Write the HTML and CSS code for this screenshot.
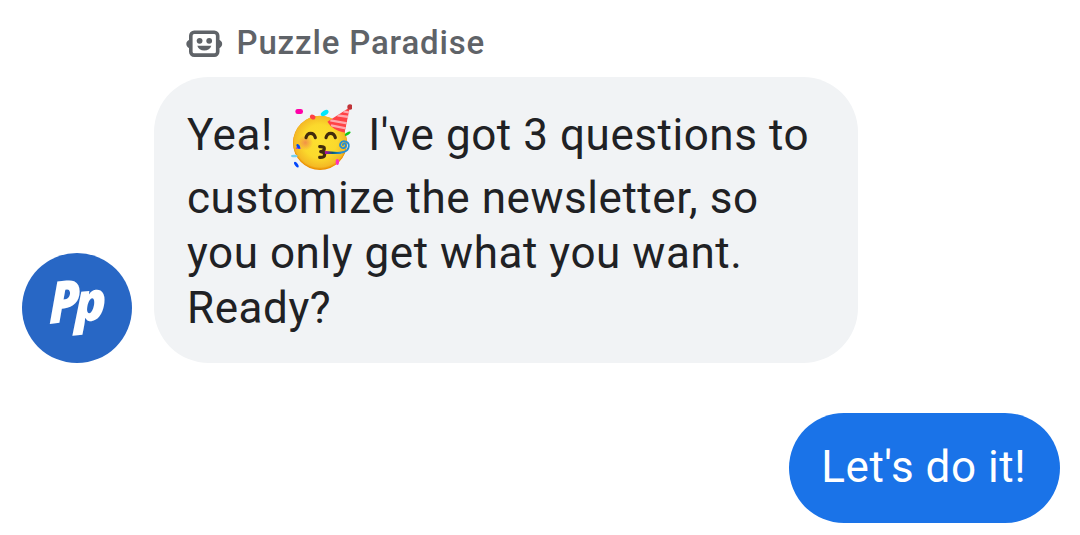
FILE: index.html
```html
<!DOCTYPE html>
<html lang="en">
<head>
<meta charset="utf-8">
<title>Puzzle Paradise</title>
<link rel="stylesheet" href="styles.css">
</head>
<body>
<main class="chat">
  <header class="sender">
    <svg class="bot" viewBox="185 30 38 28" aria-hidden="true">
      <rect x="190.800" y="32.300" width="26.900" height="22.800" rx="3.400" fill="none" stroke="#5f6368" stroke-width="3.600"/>
      <path d="M190.500 39.800a4.200 4.200 0 0 0 0 8.400zM218 39.800a4.200 4.200 0 0 1 0 8.400z" fill="#5f6368"/>
      <circle cx="199.600" cy="40.800" r="2.900" fill="#5f6368"/>
      <circle cx="209.200" cy="40.800" r="2.900" fill="#5f6368"/>
      <path d="M197.300 45.800h14c-.8 3-3.500 4.800-7 4.800s-6.200-1.800-7-4.800z" fill="#5f6368"/>
    </svg>
    <span class="name">Puzzle Paradise</span>
  </header>
  <section class="incoming">
    <svg class="avatar" viewBox="0 0 110 110" role="img" aria-label="Puzzle Paradise">
      <circle cx="55" cy="55" r="55" fill="#2867c5"/>
      <text class="mark" transform="matrix(.88 -.1 0 1.02 27 71)">P</text>
      <text class="mark" transform="matrix(.93 -.1 0 .95 52.500 69.500)">p</text>
    </svg>
    <p class="bubble">
      <span class="line first">Yea! <svg class="emoji" viewBox="33 24 183 204" role="img" aria-label="Partying face">
        <defs>
          <radialGradient id="face" cx=".5" cy=".48" r=".52"><stop offset="0" stop-color="#fde030"/><stop offset=".6" stop-color="#fbd92c"/><stop offset=".92" stop-color="#f4b925"/><stop offset="1" stop-color="#eb8f00"/></radialGradient>
          <radialGradient id="blush"><stop stop-color="#ef7950" stop-opacity=".75"/><stop offset="1" stop-color="#ef7950" stop-opacity="0"/></radialGradient>
          <linearGradient id="horn"><stop stop-color="#bd05a5"/><stop offset=".25" stop-color="#60308a"/><stop offset=".48" stop-color="#075c75"/><stop offset="1" stop-color="#278ed2"/></linearGradient>
          <clipPath id="hat"><path d="M211 36L194 113Q157 105 142 80Z"/></clipPath>
        </defs>
        <circle cx="120" cy="144" r="81" fill="#eb8f00"/>
        <circle cx="120" cy="142.500" r="80.500" fill="url(#face)"/>
        <circle cx="76" cy="143" r="23" fill="url(#blush)"/>
        <g fill="none" stroke="#422b0d" stroke-width="9.500" stroke-linecap="round" stroke-linejoin="round">
          <path d="M78 128q3-13 14-13t14 13M138 128q3-13 14-13t14 13"/>
          <path d="M119 155q15-1 14 6-1 8-11 9 12 1 12 9 0 9-15 8"/>
        </g>
        <g clip-path="url(#hat)">
          <path d="M211 30L194 116Q155 105 138 80Z" fill="#ff4246"/>
          <path d="M190 49l25 5M172 61l42 6M151 76l55 10M153 91l45 9" stroke="#ffa8ad" stroke-width="7"/>
        </g>
        <circle cx="210" cy="36" r="8" fill="#bf3338"/>
        <path d="M137 173q38 3 55-2c17-6 20-28 3-32-13-3-19 12-11 18 7 6 17-2 13-9-3-5-10-2-8 2" fill="none" stroke="#278ed2" stroke-width="5.500" stroke-linecap="round"/>
        <path d="M135 168l48 4v4l-48 1z" fill="url(#horn)"/>
        <rect x="46" y="42" width="23" height="15" rx="7" fill="#ff00a8"/>
        <ellipse cx="98" cy="66" rx="8.500" ry="7" fill="#ff4145" transform="rotate(30 98 66)"/>
        <ellipse cx="134" cy="54" rx="13" ry="7" fill="#00e8fb" transform="rotate(-33 134 54)"/>
        <ellipse cx="203" cy="116" rx="10" ry="4" fill="#14c919" transform="rotate(-33 203 116)"/>
        <path d="M47 162h17l-7-6-9 1z" fill="#bf54b0"/>
        <ellipse cx="55" cy="154" rx="4.500" ry="8" fill="#0049f5" transform="rotate(-33 55 154)"/>
        <ellipse cx="43" cy="183" rx="10" ry="4" fill="#77cfed"/>
        <ellipse cx="49" cy="209" rx="4.500" ry="10" fill="#0045fb" transform="rotate(-35 49 209)"/>
        <ellipse cx="172" cy="201" rx="5" ry="9" fill="#ff30bb"/>
      </svg> I've got 3 questions to</span>
      <span class="line">customize the newsletter, so</span>
      <span class="line">you only get what you want.</span>
      <span class="line">Ready?</span>
    </p>
  </section>
  <p class="reply">Let's do it!</p>
</main>
</body>
</html>
```
FILE: styles.css
```css
* { box-sizing: border-box; }
body {
  margin: 0;
  background: #fff;
  font-family: Roboto, sans-serif;
}
.chat {
  display: flex;
  flex-direction: column;
  width: 1080px;
  height: 535px;
  padding: 22px 20px 0 22px;
  overflow: hidden;
}
.sender {
  display: flex;
  align-items: center;
  gap: 13.5px;
  height: 42px;
  margin: 0 0 13px 163px;
  color: #5f6368;
}
.bot { width: 38px; height: 28px; margin-top: 2px; }
.name {
  font-size: 33px;
  font-weight: 500;
  line-height: 42px;
  letter-spacing: .83px;
  white-space: nowrap;
}
.incoming {
  display: flex;
  align-items: flex-end;
  gap: 22px;
}
.avatar { flex: none; width: 110px; height: 110px; }
.mark {
  fill: #fff;
  font: italic 800 57px "Open Sans", sans-serif;
}
.bubble {
  width: 704px;
  height: 286px;
  margin: 0;
  padding: 31px 33px 0;
  border-radius: 55px;
  background: #f1f3f5;
  color: #202124;
  font-size: 44px;
  line-height: 55px;
  letter-spacing: .55px;
}
.line { display: block; height: 55px; white-space: nowrap; }
.first { height: 63px; }
.emoji {
  width: 61px;
  height: 68px;
  margin: -30px 4.5px -20px 7px;
  vertical-align: -1px;
}
.reply {
  align-self: flex-end;
  width: 271px;
  height: 110px;
  margin: 50px 0 0;
  border-radius: 55px;
  background: #1a73e8;
  color: #fff;
  font-size: 44px;
  line-height: 108px;
  letter-spacing: .55px;
  padding-left: 32.3px;
  white-space: nowrap;
}
```
